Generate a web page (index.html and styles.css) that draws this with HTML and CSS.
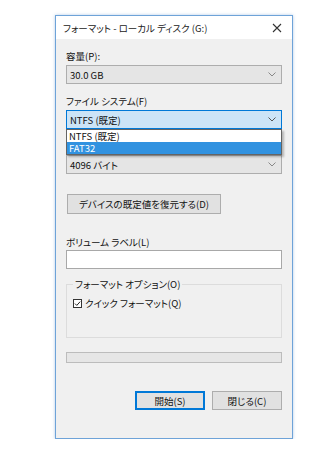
FILE: index.html
```html
<!DOCTYPE html>
<html lang="ja">
<head>
    <meta charset="UTF-8">
    <meta name="viewport" content="width=device-width, initial-scale=1.0">
    <title>フォーマット</title>
    <link rel="stylesheet" href="styles.css">
</head>
<body>
    <div class="window">
        <div class="titlebar">
            <span class="title">フォーマット - ローカル ディスク (G:)</span>
            <svg class="close" width="10" height="10" viewBox="0 0 10 10">
                <path d="M1 1 L9 9 M9 1 L1 9" stroke="#333" stroke-width="1.1" fill="none"/>
            </svg>
        </div>

        <div class="content">
            <div class="field">
                <div class="label">容量(P):</div>
                <div class="combo">
                    <span>30.0 GB</span>
                    <svg class="chevron" width="8" height="5" viewBox="0 0 8 5"><path d="M0.5 0.5 L4 4 L7.5 0.5" stroke="#888" fill="none"/></svg>
                </div>
            </div>

            <div class="field">
                <div class="label">ファイル システム(F)</div>
                <div class="combo-wrap">
                    <div class="combo active">
                        <span>NTFS (既定)</span>
                        <svg class="chevron" width="8" height="5" viewBox="0 0 8 5"><path d="M0.5 0.5 L4 4 L7.5 0.5" stroke="#555" fill="none"/></svg>
                    </div>
                    <ul class="dropdown">
                        <li>NTFS (既定)</li>
                        <li class="selected">FAT32</li>
                    </ul>
                </div>
            </div>

            <div class="field">
                <!-- covered by the open list, as in the real dialog -->
                <div class="label covered">アロケーション ユニット サイズ(A)</div>
                <div class="combo">
                    <span>4096 バイト</span>
                    <svg class="chevron" width="8" height="5" viewBox="0 0 8 5"><path d="M0.5 0.5 L4 4 L7.5 0.5" stroke="#888" fill="none"/></svg>
                </div>
            </div>

            <button class="btn restore">デバイスの既定値を復元する(D)</button>

            <div class="field volume">
                <div class="label">ボリューム ラベル(L)</div>
                <div class="textbox"></div>
            </div>

            <fieldset class="group">
                <legend>フォーマット オプション(O)</legend>
                <div class="check">
                    <svg class="box" width="9" height="9" viewBox="0 0 9 9">
                        <rect x="0.5" y="0.5" width="8" height="8" fill="#fff" stroke="#333"/>
                        <path d="M2 4.6 L3.8 6.4 L7.2 2.6" stroke="#222" stroke-width="1" fill="none"/>
                    </svg>
                    <span>クイック フォーマット(Q)</span>
                </div>
            </fieldset>

            <div class="progress"></div>

            <div class="actions">
                <button class="btn default">開始(S)</button>
                <button class="btn">閉じる(C)</button>
            </div>
        </div>
    </div>
</body>
</html>
```

FILE: styles.css
```css
body {
    margin: 0;
    background-color: #fff;
    font-family: "Noto Sans CJK JP", "Noto Sans", sans-serif;
    font-size: 9.5px;
    color: #111;
    font-feature-settings: "palt";
}
.window {
    width: 236px;
    margin: 15px 0 0 55px;
    border: 1px solid #6ea3d8;
    box-shadow: 0 0 3px rgba(40, 110, 190, 0.35);
    background: #f0f0f0;
}
.titlebar {
    height: 23px;
    background: #fff;
    display: flex;
    align-items: center;
    justify-content: space-between;
    padding: 0 8px 0 7px;
}
.title {
    font-size: 9.5px;
    color: #222;
}
.close {
    margin-right: 2px;
}
.content {
    padding: 11px 10px 28px 10px;
}
.label {
    height: 12px;
    line-height: 12px;
    margin-bottom: 3px;
}
.label.covered {
    visibility: hidden;
}
.field {
    margin-bottom: 11px;
}
.combo {
    height: 17px;
    border: 1px solid #adadad;
    background: #e5e5e5;
    display: flex;
    align-items: center;
    justify-content: space-between;
    padding: 0 5px 0 3px;
}
.combo.active {
    border-color: #0078d7;
    background: #cce4f7;
}
.combo-wrap {
    position: relative;
}
.dropdown {
    position: absolute;
    top: 100%;
    left: 0;
    right: 0;
    margin: 0;
    padding: 0;
    list-style: none;
    background: #fff;
    border: 1px solid #646464;
    box-shadow: 2px 2px 2px rgba(0, 0, 0, 0.25);
    z-index: 2;
}
.dropdown li {
    height: 12px;
    line-height: 12px;
    padding: 0 2px;
}
.dropdown li.selected {
    background: #3192e0;
    color: #fff;
}
.btn {
    font-family: inherit;
    font-size: 9.5px;
    font-feature-settings: "palt";
    color: #111;
    background: #e1e1e1;
    border: 1px solid #adadad;
    padding: 0;
    margin: 0;
}
.restore {
    display: block;
    width: 154px;
    height: 20px;
    margin: 20px 0 22px 1px;
}
.volume .label {
    margin-bottom: 2px;
}
.volume {
    margin-bottom: 9px;
}
.textbox {
    height: 17px;
    border: 1px solid #a8a8a8;
    background: #fff;
}
.group {
    margin: 0;
    padding: 6px 6px 0 6px;
    height: 52px;
    border: 1px solid #dcdcdc;
}
.group legend {
    padding: 0 2px;
    margin-left: 0;
    line-height: 12px;
}
.check {
    display: flex;
    align-items: center;
    gap: 3px;
}
.check .box {
    flex: none;
}
.progress {
    height: 9px;
    margin-top: 14px;
    border: 1px solid #bcbcbc;
    background: #e6e6e6;
}
.actions {
    display: flex;
    justify-content: flex-end;
    gap: 7px;
    margin-top: 28px;
}
.actions .btn {
    width: 70px;
    height: 19px;
}
.actions .default {
    border: 1px solid #0078d7;
    box-shadow: inset 0 0 0 1px #0078d7;
}
```
